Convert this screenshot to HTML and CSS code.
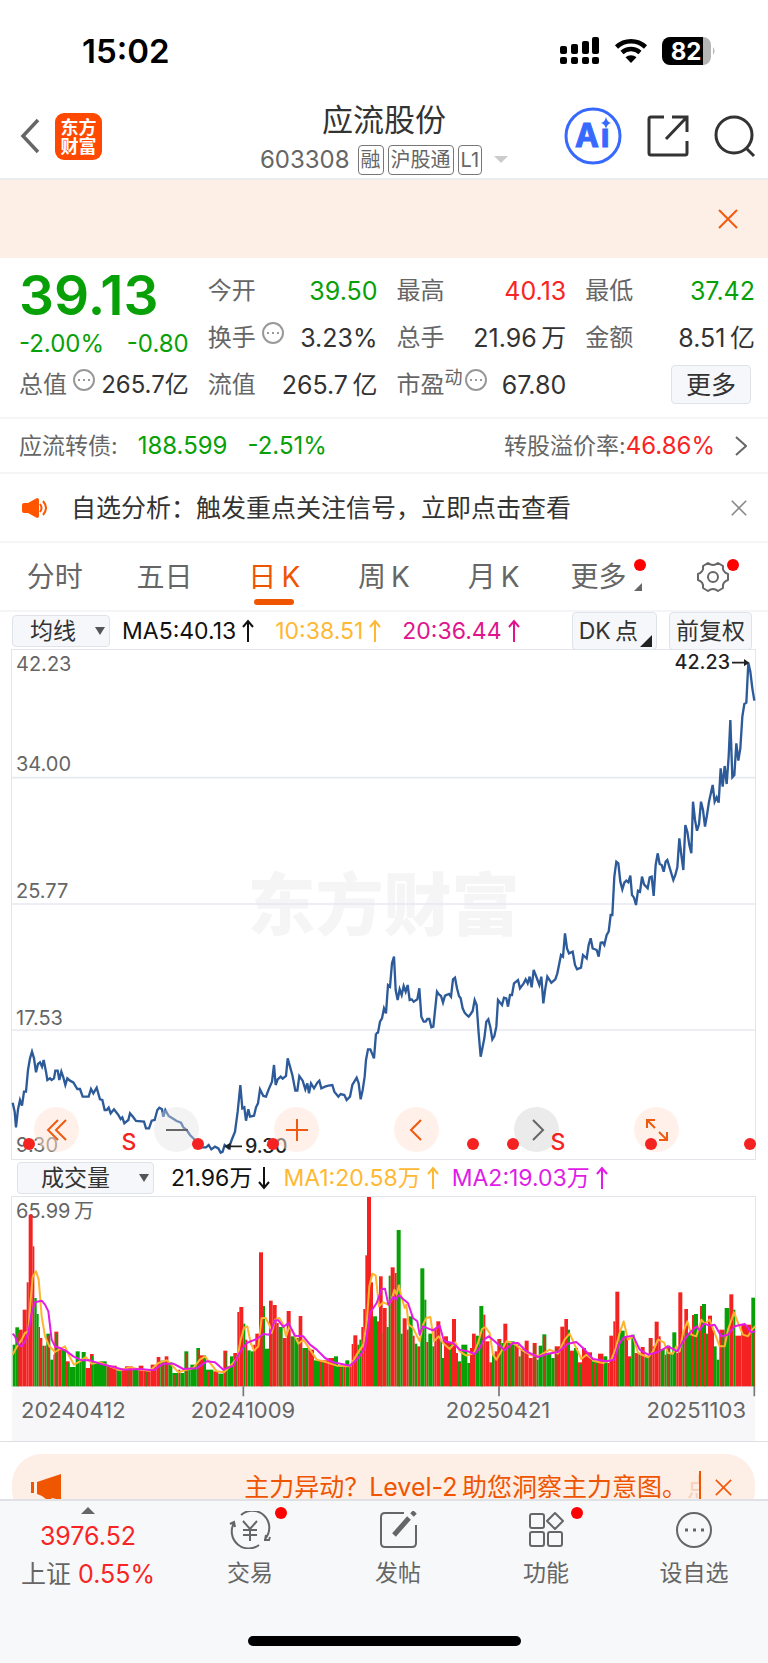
FILE: index.html
```html
<!DOCTYPE html>
<html lang="zh-CN">
<head>
  <meta charset="utf-8">
  <meta name="viewport" content="width=device-width, initial-scale=1">
  <title>应流股份 603308</title>
  <link rel="stylesheet" href="styles.css">
</head>
<body>
  <svg class="defs" aria-hidden="true">
    <symbol id="up" viewBox="0 0 12 24"><path d="M6 23V2M1 8l5-6 5 6"/></symbol>
    <symbol id="down" viewBox="0 0 12 24"><path d="M6 1v21M1 16l5 6 5-6"/></symbol>
    <symbol id="close" viewBox="0 0 20 20"><path d="M1 1l18 18M19 1L1 19"/></symbol>
    <symbol id="info" viewBox="0 0 22 22"><circle cx="11" cy="11" r="10"/><path d="M5 11h2M10 11h2M15 11h2" stroke-width="2"/></symbol>
  </svg>

  <div class="status">
    <span class="clock">15:02</span>
    <div class="status-icons">
      <svg width="40" height="28" viewBox="0 0 40 28">
        <g fill="#000">
          <rect x="0" y="9" width="7" height="8" rx="2"/><rect x="11" y="7" width="7" height="10" rx="2"/><rect x="22" y="4" width="7" height="13" rx="2"/><rect x="32" y="0" width="7" height="17" rx="2"/>
          <rect x="0" y="20" width="7" height="7" rx="2"/><rect x="11" y="20" width="7" height="7" rx="2"/><rect x="22" y="20" width="7" height="7" rx="2"/><rect x="32" y="20" width="7" height="7" rx="2"/>
        </g>
      </svg>
      <svg width="34" height="26" viewBox="0 0 34 26">
        <path d="M2.500 9a21 21 0 0 1 29 0M8 14.500a13.500 13.500 0 0 1 18 0" fill="none" stroke="#000" stroke-width="4.500"/>
        <path d="M17 25l-5.500-5.800a8.500 8.500 0 0 1 11 0z"/>
      </svg>
      <svg width="54" height="28" viewBox="0 0 54 28">
        <path d="M8 0h33v28H8a8 8 0 0 1-8-8V8a8 8 0 0 1 8-8z"/>
        <path d="M41 0a8 8 0 0 1 8 8v12a8 8 0 0 1-8 8zM51 10q3 4 0 8z" fill="#b5b5b5"/>
        <text x="24" y="23" class="battery-text">82</text>
      </svg>
    </div>
  </div>

  <header class="header">
    <div class="header-side">
      <button class="icon-btn" aria-label="返回"><svg width="20" height="36" viewBox="0 0 20 36"><path d="M18 2L3 18l15 16" fill="none" stroke="#666" stroke-width="3.500"/></svg></button>
      <div class="logo">东方<br>财富</div>
    </div>
    <div class="title">
      <h1>应流股份</h1>
      <div class="code">
        <span>603308</span>
        <span class="tag">融</span><span class="tag">沪股通</span><span class="tag">L1</span>
        <i class="caret"></i>
      </div>
    </div>
    <div class="header-side header-right">
      <button class="icon-btn" aria-label="AI">
        <svg width="58" height="58" viewBox="0 0 58 58"><circle cx="29" cy="29" r="27" fill="none" stroke="#3769ff" stroke-width="3"/><text x="23" y="40" class="ai-text">A</text><text x="41" y="40" class="ai-text">ı</text><path d="M42 10q1 5 5 6-4 1-5 6-1-5-5-6 4-1 5-6z" fill="#3769ff"/></svg>
      </button>
      <button class="icon-btn" aria-label="分享">
        <svg width="42" height="42" viewBox="0 0 42 42" fill="none" stroke="#333" stroke-width="3"><path d="M17 2H4q-2 0-2 2v34q0 2 2 2h34q2 0 2-2V26M25 2h15v15M39 3L19 24"/></svg>
      </button>
      <button class="icon-btn" aria-label="搜索">
        <svg width="42" height="44" viewBox="0 0 42 44" fill="none" stroke="#333" stroke-width="3"><circle cx="20" cy="21" r="18"/><path d="M32 34l8 8"/></svg>
      </button>
    </div>
  </header>

  <div class="banner">
    <button class="icon-btn" aria-label="关闭"><svg class="line-icon orange" width="20" height="20"><use href="#close"/></svg></button>
  </div>

  <section class="quote">
    <div class="price">
      <strong>39.13</strong>
      <div class="change"><span>-2.00%</span><span>-0.80</span></div>
    </div>
    <div class="cell"><span>今开</span><b class="green">39.50</b></div>
    <div class="cell"><span>最高</span><b class="red">40.13</b></div>
    <div class="cell"><span>最低</span><b class="green">37.42</b></div>
    <div class="cell"><span>换手<svg class="info" width="22" height="22"><use href="#info"/></svg></span><b>3.23%</b></div>
    <div class="cell"><span>总手</span><b>21.96&thinsp;万</b></div>
    <div class="cell"><span>金额</span><b>8.51&thinsp;亿</b></div>
    <div class="cell small"><span>总值<svg class="info" width="22" height="22"><use href="#info"/></svg></span><b>265.7亿</b></div>
    <div class="cell"><span>流值</span><b>265.7&thinsp;亿</b></div>
    <div class="cell"><span>市盈<sup>动</sup><svg class="info tight" width="22" height="22"><use href="#info"/></svg></span><b>67.80</b></div>
    <div class="cell cell-more"><button class="box-btn more">更多</button></div>
  </section>

  <a class="bond" href="#bond">
    <span>应流转债:</span>
    <b class="green">188.599</b>
    <b class="green">-2.51%</b>
    <span class="premium">转股溢价率:<b class="red">46.86%</b></span>
    <svg width="12" height="20" viewBox="0 0 12 20"><path d="M1 1l10 9-10 9" fill="none" stroke="#666" stroke-width="2"/></svg>
  </a>

  <div class="notice">
    <svg width="26" height="22" viewBox="0 0 26 22"><path d="M2 6h4l9-5q2 0 2 2v16q0 2-2 2l-9-5H2q-2 0-2-2V8q0-2 2-2z" fill="#ff5500"/><path d="M18 7q3 4 0 8M21 4q6 7 0 14" fill="none" stroke="#ff5500" stroke-width="2"/></svg>
    <span>自选分析：触发重点关注信号，立即点击查看</span>
    <button class="icon-btn" aria-label="关闭"><svg class="line-icon grey" width="16" height="16"><use href="#close"/></svg></button>
  </div>

  <nav class="tabs">
    <button>分时</button>
    <button>五日</button>
    <button class="active">日&thinsp;K</button>
    <button>周&thinsp;K</button>
    <button>月&thinsp;K</button>
    <button class="tab-more"><span class="has-dot">更多<i class="corner"></i></span></button>
    <button aria-label="设置"><span class="has-dot gear"><svg width="32" height="32" viewBox="0 0 32 32" fill="none" stroke="#666" stroke-width="2"><path d="M11 2q5 4 10 0l5 3q-1 6 5 8v6q-6 2-5 8l-5 3q-5-4-10 0l-5-3q1-6-5-8v-6q6-2 5-8z" stroke-linejoin="round"/><circle cx="16" cy="16" r="5"/></svg></span></button>
  </nav>

  <div class="legend">
    <label class="picker"><select aria-label="主图指标"><option>均线</option></select></label>
    <span class="ma">MA5:40.13<svg class="arrow"><use href="#up"/></svg></span>
    <span class="ma yellow">10:38.51<svg class="arrow"><use href="#up"/></svg></span>
    <span class="ma pink">20:36.44<svg class="arrow"><use href="#up"/></svg></span>
    <button class="box-btn dk">DK&thinsp;点<i class="corner dark"></i></button>
    <button class="box-btn">前复权</button>
  </div>

  <div class="chart price-chart">
    <div class="watermark">东方财富</div>
    <svg class="plot" viewBox="-1068 30 2229 1527">
      <path class="grid-line" d="M-1068 413H1161M-1068 792H1161M-1068 1170H1161"/>
      <polyline class="price-line" transform="translate(-1104 1140)" points="38,248 44,275 48,322 54,268 60,240 66,257 72,215 78,215 84,150 90,115 96,95 102,115 108,157 114,132 120,127 126,140 131,120 138,155 142,180 150,175 155,180 162,175 166,152 173,152 178,180 184,155 190,172 196,195 202,175 210,182 220,187 232,207 240,207 248,230 266,230 273,207 280,220 290,203 300,238 307,240 314,270 320,270 326,263 332,280 342,268 355,285 362,297 367,292 373,310 385,300 390,280 400,292 408,303 432,305 438,325 447,325 455,302 464,300 472,270 478,263 486,268 490,290 496,270 506,288 522,298 530,303 543,308 550,322 560,330 570,345 585,360 605,382 618,382 626,375 634,388 645,380 655,385 662,398 668,395 674,375 686,385 695,360 705,335 713,275 721,195 727,265 733,262 738,302 745,268 750,290 762,287 768,262 774,250 780,208 790,228 798,230 806,208 816,185 822,135 827,195 833,178 842,170 848,176 858,168 863,115 870,140 877,165 886,212 892,212 898,168 908,182 916,208 922,190 927,220 933,190 942,205 952,188 958,182 964,205 975,200 985,197 997,195 1003,215 1015,230 1022,222 1033,225 1040,240 1050,230 1057,195 1070,173 1076,190 1082,238 1088,210 1094,170 1098,120 1104,88 1111,88 1116,100 1122,115 1128,40"/>
      <polyline class="price-line" points="24,1180 30,1178 36,1145 42,1135 48,1105 54,1120 60,1035 66,1040 72,970 78,950 83,1050 89,1080 95,1048 101,1065 107,1038 113,1055 119,1035 125,1080 131,1078 137,1085 148,1078 154,1045 160,1130 167,1145 173,1145 178,1137 184,1137 190,1162 196,1160 207,1055 213,1063 219,1068 225,1088 231,1067 243,1062 249,1070 255,1018 261,1013 267,1045 273,1068 278,1075 284,1105 290,1118 296,1125 302,1130 308,1122 314,1113 320,1080 326,1095 332,1180 338,1250 344,1220 349,1195 355,1145 361,1138 367,1162 373,1198 379,1188 385,1160 390,1080 402,1095 408,1073 415,1075 420,1100 426,1065 432,1065 438,1030 450,1020 456,1045 467,1030 473,1018 479,1030 485,1010 491,1042 497,990 503,1005 514,1035 520,1010 526,1090 532,1045 538,1010 550,1028 562,1018 568,1000 579,945 585,950 591,880 597,925 603,940 614,935 621,975 627,988 639,983 645,945 656,955 662,915 668,895 674,925 686,930 692,950 698,908 704,907 709,915 716,885 722,875 728,825 733,825 739,710 745,665 751,670 757,725 763,748 769,728 775,722 781,727 787,707 792,765 798,773 804,795 810,752 816,755 822,710 828,733 839,745 845,712 851,710 857,768 863,675 869,640 875,672 881,675 887,695 893,665 898,660 910,700 916,720 922,705 928,682 934,595 940,645 946,690 952,555 958,575 964,615 970,640 975,485 981,540 987,572 993,553 999,485 1005,510 1011,560 1017,525 1023,485 1034,435 1040,485 1046,472 1052,488 1058,385 1064,440 1070,378 1076,432 1082,350 1087,240 1093,412 1099,405 1105,310 1111,362 1117,325 1123,230 1129,192 1135,188 1141,68 1147,95 1153,145 1159,182"/>
      <path d="M1092 68h40M-378 1519h-40" stroke="#222" stroke-width="5"/>
      <path d="M1144 68l-16-11v22zM-432 1519l20-11v22z" fill="#222"/>
      <g class="marks">
        <text x="1086" y="88" text-anchor="end">42.23</text>
        <text x="-369" y="1540">9.30</text>
      </g>
    </svg>
    <span class="scale s0">42.23</span>
    <span class="scale s1">34.00</span>
    <span class="scale s2">25.77</span>
    <span class="scale s3">17.53</span>
    <span class="scale s4">9.30</span>
    <div class="controls">
      <button aria-label="快退"><svg viewBox="0 0 24 24"><path d="M13 2L3 12l10 10M21 2L11 12l10 10"/></svg></button>
      <button class="off" aria-label="缩小"><svg viewBox="0 0 24 24"><path d="M1 12h22"/></svg></button>
      <button aria-label="放大"><svg viewBox="0 0 24 24"><path d="M1 12h22M12 1v22"/></svg></button>
      <button aria-label="左移"><svg viewBox="0 0 24 24"><path d="M16 2L6 12l10 10"/></svg></button>
      <button class="off dim" aria-label="右移"><svg viewBox="0 0 24 24"><path d="M8 2l10 10L8 22"/></svg></button>
      <button aria-label="全屏"><svg viewBox="0 0 24 24"><path d="M2 10V2h8M2 2l8 8M22 14v8h-8M22 22l-8-8"/></svg></button>
    </div>
    <svg class="plot events" viewBox="0 0 743 509">
      <g fill="#f52222">
        <circle cx="17" cy="494" r="6"/><circle cx="186" cy="494" r="6"/><circle cx="261" cy="494" r="6"/><circle cx="461" cy="494" r="6"/><circle cx="501" cy="494" r="6"/><circle cx="639" cy="494" r="6"/><circle cx="738" cy="494" r="6"/>
        <text x="117" y="500">S</text><text x="546" y="500">S</text>
      </g>
    </svg>
  </div>

  <div class="legend volume-legend">
    <label class="picker wide"><select aria-label="副图指标"><option>成交量</option></select></label>
    <span class="ma">21.96万<svg class="arrow"><use href="#down"/></svg></span>
    <span class="ma yellow">MA1:20.58万<svg class="arrow"><use href="#up"/></svg></span>
    <span class="ma magenta">MA2:19.03万<svg class="arrow"><use href="#up"/></svg></span>
  </div>

  <div class="chart volume-chart">
    <span class="scale s0">65.99&thinsp;万</span>
    <svg class="plot" viewBox="36 22 2229 568">
      <g id="bars"></g>
      <path d="M730 590v30M1497 590v30M2263 590v30" stroke="#777" stroke-width="5"/>
      <g class="avg avg-yellow">
        <polyline points="38,495 50,472 65,450 75,430 85,425 92,330 98,262 108,245 116,270 125,380 135,440 148,470 165,487 180,478 195,470 208,500 222,525 240,515 257,502 275,522 300,518 330,530 360,542 390,533 420,540 450,543 475,520 500,512 517,528 535,548 560,540 580,535 600,510 615,500 630,520 650,545 672,548 690,530 712,505 722,450 732,415 742,410 752,460 762,483 775,470 785,385 797,385 808,405 815,430 825,390 838,385 850,405 858,440 868,410 880,430 895,462 910,450 930,480 950,510 980,518 1010,528 1050,530 1070,495 1090,465 1100,400 1108,290 1117,252 1127,257 1137,350 1150,338 1165,345 1175,330 1183,300 1190,315 1197,285"/>
        <polyline transform="translate(1104 0)" points="92,285 100,320 110,355 115,345 122,405 135,415 155,455 165,405 175,385 187,382 198,455 212,440 225,460 245,478 262,458 275,485 295,498 318,490 330,460 342,418 352,412 365,430 375,495 385,510 400,485 415,455 440,462 460,480 490,497 515,498 545,480 570,492 590,450 605,432 620,465 640,508 655,495 680,515 705,520 730,510 742,480 755,430 767,395 780,450 795,440 810,490 840,503 855,485 870,450 888,458 900,490 915,492 925,470 935,485 945,430 958,395 970,435 985,440 1000,390 1010,402 1025,390 1040,430 1055,470 1070,470 1080,420 1098,368 1112,405 1125,435 1140,440 1152,420 1162,410"/>
      </g>
      <g class="avg avg-magenta">
        <polyline points="38,432 45,440 55,465 65,470 75,455 85,430 95,370 105,338 125,333 135,345 145,365 155,450 165,470 180,475 200,485 220,500 245,512 270,512 300,522 340,532 370,540 420,538 460,542 490,522 520,522 550,538 590,536 620,515 645,518 670,540 700,528 718,490 740,460 770,448 790,433 808,435 825,392 835,392 850,412 865,400 885,438 910,440 930,465 950,480 975,505 1000,518 1050,528 1075,505 1095,475 1110,370 1130,340 1145,298 1155,297 1165,345 1180,322 1188,330 1196,315"/>
        <polyline transform="translate(1104 0)" points="92,315 105,328 120,340 135,385 148,395 155,435 165,410 195,422 215,408 228,455 255,460 275,480 300,485 320,493 335,475 348,450 362,440 380,455 410,482 435,460 450,460 475,485 510,502 540,492 570,487 600,462 625,457 645,475 675,508 715,515 738,510 752,465 768,443 795,438 815,480 840,495 870,487 900,470 928,485 945,455 965,430 985,410 995,422 1008,402 1025,408 1040,405 1060,440 1080,435 1100,410 1130,403 1150,428 1162,425"/>
      </g>
    </svg>
  </div>
  <div class="axis"><span>20240412</span><span>20241009</span><span>20250421</span><span>20251103</span></div>

  <div class="promo-slot">
    <div class="promo">
      <svg width="32" height="26" viewBox="0 0 32 26" fill="#f05500"><path d="M0 8h3v11H0zM6 8L30 0v26l-9-2q-2 3-6 1l-4-3-5-2z"/></svg>
      <div class="promo-text">主力异动？Level-2&thinsp;助您洞察主力意图。<span class="faded">点</span></div>
      <button class="icon-btn" aria-label="关闭"><svg class="line-icon orange" width="17" height="17"><use href="#close"/></svg></button>
    </div>
  </div>

  <footer class="bottom">
    <div class="bottom-row">
      <a class="index" href="#index">
        <i class="up-caret"></i>
        <b>3976.52</b>
        <span>上证 <b>0.55%</b></span>
      </a>
      <a href="#trade"><span class="has-dot"><svg viewBox="0 0 42 38"><path d="M12 4a17 17 0 0 1 24 24M30 34A17 17 0 0 1 5 12M1 13l4-2 1 5M36 29l1-5M41 26l-1 3h-5M14 10l7 8 7-8M21 18v12M14 19h14M14 24h14"/></svg></span>交易</a>
      <a href="#post"><span><svg viewBox="0 0 42 38"><path d="M27 2H8q-4 0-4 4v26q0 4 4 4h27q4 0 4-4V14"/><path d="M17 24l15-17M35 4l3-3" stroke-width="5"/></svg></span>发帖</a>
      <a href="#tools"><span class="has-dot"><svg viewBox="0 0 42 38"><rect x="5" y="3" width="14" height="14" rx="2"/><rect x="5" y="21" width="14" height="14" rx="2"/><rect x="23" y="21" width="14" height="14" rx="2"/><path d="M30 2l8 8-8 8-8-8z" stroke-linejoin="round"/></svg></span>功能</a>
      <a href="#watch"><span><svg viewBox="0 0 42 38"><circle cx="21" cy="19" r="17"/><path d="M12 19h3M20 19h3M28 19h3" stroke-width="3"/></svg></span>设自选</a>
    </div>
    <div class="home-bar"></div>
  </footer>

  <script src="chart.js"></script>
</body>
</html>
```

FILE: styles.css
```css
* {
  box-sizing: border-box;
}
body {
  display: flex;
  flex-direction: column;
  min-height: 100vh;
  margin: 0;
  background: #fff;
  color: #333;
  font-family: Inter, "Noto Sans CJK SC", sans-serif;
  font-size: 24px;
  line-height: 32px;
}
button, select {
  font: inherit;
  color: inherit;
  background: none;
  border: 0;
  padding: 0;
  margin: 0;
}
a {
  color: inherit;
  text-decoration: none;
}
b {
  font-weight: 400;
}
svg {
  display: block;
  flex: none;
}
.defs {
  position: absolute;
  width: 0;
  height: 0;
}
.green { color: #07a007; }
.red { color: #f92424; }
.icon-btn {
  display: block;
}
.line-icon {
  fill: none;
  stroke-width: 2;
}
.orange { stroke: #f05a10; }
.grey { stroke: #888; }

/* status bar */
.status {
  display: flex;
  justify-content: space-between;
  align-items: center;
  height: 82px;
  padding: 20px 52px 0 82px;
}
.clock {
  color: #000;
  font-size: 33px;
  font-weight: 600;
}
.status-icons {
  display: flex;
  align-items: center;
  gap: 14px;
}
.battery-text {
  fill: #fff;
  font-size: 24px;
  font-weight: 700;
  text-anchor: middle;
}

/* header */
.header {
  display: grid;
  grid-template-columns: 1fr auto 1fr;
  align-items: center;
  height: 98px;
  padding: 0 12px;
  border-bottom: 2px solid #ececee;
}
.header-side {
  display: flex;
  align-items: center;
  gap: 15px;
  padding: 12px 0 0 8px;
}
.header-right {
  justify-content: flex-end;
  gap: 25px;
}
.logo {
  width: 47px;
  height: 47px;
  padding-top: 5px;
  border-radius: 9px;
  background: #ff4800;
  color: #fff;
  font-size: 18px;
  font-weight: 700;
  line-height: 19px;
  text-align: center;
}
.title {
  padding-top: 11px;
}
.title h1 {
  margin: 0;
  font-size: 31px;
  font-weight: 400;
  line-height: 48px;
  text-align: center;
}
.code {
  display: flex;
  align-items: center;
  gap: 4px;
  color: #666;
}
.tag {
  padding: 0 2px;
  border: 1px solid #777;
  border-radius: 4px;
  font-size: 20px;
  line-height: 28px;
}
.code span:first-child {
  margin-right: 4px;
}
.caret {
  margin-left: 8px;
  border: 7px solid transparent;
  border-top-color: #ccc;
  border-bottom: 0;
}
.ai-text {
  fill: #3769ff;
  stroke: #3769ff;
  font-size: 32px;
  font-weight: 700;
  text-anchor: middle;
}
.banner {
  display: flex;
  justify-content: flex-end;
  align-items: center;
  height: 78px;
  padding-right: 30px;
  background: #fdeee6;
}

/* quote */
.quote {
  display: grid;
  grid-template-columns: repeat(4, 1fr);
  grid-auto-rows: 47px;
  column-gap: 19px;
  padding: 9px 13px 9px 19px;
  border-bottom: 2px solid #f5f5f7;
}
.price {
  grid-row: span 2;
  color: #07a007;
}
.price strong {
  display: block;
  font-size: 55px;
  font-weight: 600;
  line-height: 56px;
}
.change {
  display: flex;
  justify-content: space-between;
  line-height: 42px;
}
.cell {
  display: flex;
  justify-content: space-between;
  align-items: center;
  font-size: 25px;
  white-space: nowrap;
}
.cell span {
  display: flex;
  align-items: center;
  color: #666;
  font-size: 24px;
}
.cell.small {
  font-size: 24px;
}
.cell sup {
  align-self: flex-start;
  font-size: 18px;
  line-height: 18px;
}
.info {
  margin: 0 0 10px 6px;
  fill: none;
  stroke: #999;
  stroke-width: 2;
}
.info.tight {
  margin-left: 2px;
}
.box-btn {
  border: 1px solid #dfe2e8;
  border-radius: 4px;
  background: #f6f7fa;
}
.cell-more {
  justify-content: flex-end;
  padding-right: 4px;
}
.more {
  width: 80px;
  height: 39px;
}

/* convertible bond and notice */
.bond {
  display: flex;
  align-items: center;
  gap: 20px;
  height: 55px;
  padding: 0 21px 0 19px;
  border-bottom: 2px solid #f5f5f7;
  color: #666;
  font-size: 23px;
}
.bond b {
  font-size: 24px;
}
.premium {
  margin-left: auto;
}
.notice {
  display: flex;
  align-items: center;
  height: 69px;
  padding: 0 21px 0 22px;
  border-bottom: 2px solid #f5f5f7;
  font-size: 25px;
}
.notice span {
  flex: 1;
  margin-left: 23px;
}

/* period tabs */
.tabs {
  display: grid;
  grid-template-columns: repeat(7, 1fr);
  height: 69px;
  border-bottom: 2px solid #f5f5f7;
  color: #666;
  font-size: 28px;
}
.tabs button {
  display: flex;
  position: relative;
  justify-content: center;
  align-items: center;
}
.tabs .tab-more {
  padding-right: 10px;
}
.tabs .active {
  color: #ef5500;
}
.tabs .active::after {
  content: "";
  position: absolute;
  bottom: 5px;
  width: 40px;
  height: 6px;
  border-radius: 3px;
  background: #ef5500;
}
.has-dot {
  position: relative;
}
.has-dot::after {
  content: "";
  position: absolute;
  top: -2px;
  right: -20px;
  width: 12px;
  height: 12px;
  border-radius: 50%;
  background: #f00;
}
.gear::after {
  right: -10px;
}
.corner {
  position: absolute;
  right: -16px;
  bottom: 2px;
  border-left: 8px solid transparent;
  border-bottom: 8px solid #666;
}
.corner.dark {
  right: 4px;
  bottom: 2px;
  border-width: 0 0 12px 12px;
  border-bottom-color: #222;
}

/* indicator rows */
.legend {
  display: flex;
  align-items: center;
  height: 38px;
  padding: 0 16px 0 12px;
  white-space: nowrap;
}
.legend .box-btn {
  height: 38px;
  padding: 0 6px;
  margin-left: 12px;
  font-size: 23px;
}
.legend .dk {
  position: relative;
  margin-left: auto;
  padding-right: 18px;
}
.picker {
  position: relative;
  width: 98px;
  margin-right: 12px;
}
.picker::after {
  content: "";
  position: absolute;
  top: 12px;
  right: 5px;
  border: 5px solid transparent;
  border-top: 8px solid #555;
  border-bottom: 0;
}
.picker select {
  display: block;
  appearance: none;
  width: 100%;
  height: 32px;
  padding-left: 17px;
  border: 1px solid #dfe2e8;
  border-radius: 4px;
  background: #f6f7fa;
  font-size: 23px;
  line-height: 28px;
}
.ma {
  display: flex;
  align-items: center;
  gap: 6px;
  margin-right: 21px;
  color: #111;
  font-size: 23px;
}
.arrow {
  width: 12px;
  height: 24px;
  fill: none;
  stroke: currentColor;
  stroke-width: 2;
}
.yellow { color: #ffb833; }
.pink { color: #e0148c; }
.magenta { color: #e01ce6; }
.volume-legend {
  padding-left: 17px;
}
.volume-legend .ma {
  margin-right: 13px;
}
.picker.wide {
  width: 137px;
  margin-right: 17px;
}
.picker.wide select {
  padding-left: 23px;
}

/* charts */
.chart {
  position: relative;
  margin: 0 13px 0 12px;
  outline: 1px solid #e2e5ea;
}
.plot {
  position: relative;
  width: 100%;
  overflow: visible;
}
.grid-line {
  stroke: #e6e9f1;
  stroke-width: 5;
}
.price-line {
  fill: none;
  stroke: #2d5a99;
  stroke-width: 7;
}
.marks {
  fill: #222;
  font-size: 59px;
  font-weight: 500;
}
.events {
  position: absolute;
  top: 0;
  left: 0;
  font-size: 23px;
  font-weight: 500;
  text-anchor: middle;
  pointer-events: none;
}
.watermark {
  position: absolute;
  top: 43%;
  width: 100%;
  color: #f5f5f5;
  font-size: 68px;
  font-weight: 900;
  line-height: 72px;
  text-align: center;
}
.scale {
  position: absolute;
  left: 4px;
  color: #666;
  font-size: 20px;
  line-height: 24px;
}
.s0 { top: 2px; }
.s1 { top: 20%; }
.s2 { top: 45%; }
.s3 { top: 70%; }
.s4 { bottom: 2px; }
.controls {
  display: flex;
  position: absolute;
  bottom: 7px;
  left: 0;
  justify-content: space-between;
  width: 100%;
  padding: 0 76px 0 22px;
}
.controls button {
  display: flex;
  justify-content: center;
  align-items: center;
  width: 45px;
  height: 45px;
  border-radius: 50%;
  background: rgba(255, 227, 211, 0.5);
}
.controls svg {
  width: 24px;
  fill: none;
  stroke: #ee5a10;
  stroke-width: 2;
}
.controls .off {
  background: rgba(225, 225, 225, 0.4);
}
.controls .dim {
  background: #ebebeb;
}
.controls .off svg {
  stroke: #666;
}
.avg {
  fill: none;
  stroke-width: 6;
  stroke-linejoin: round;
}
.avg-yellow { stroke: #ffb42e; }
.avg-magenta { stroke: #e41be4; }
.bar-up { fill: #f52222; }
.bar-down { fill: #07a007; }
.axis {
  display: grid;
  grid-template-columns: 121fr 220fr 290fr 112fr;
  height: 55px;
  margin: 0 13px 0 12px;
  background: #f7f7fa;
  color: #666;
  font-size: 22px;
  line-height: 48px;
  text-align: center;
}
.axis span:first-child {
  padding-left: 9px;
  text-align: left;
}
.axis span:last-child {
  padding-right: 9px;
  text-align: right;
}

/* promo strip, cut off by the bottom bar */
.promo-slot {
  height: 58px;
  padding: 12px 13px 0 12px;
  border-top: 1px solid #dedfe3;
  overflow: hidden;
}
.promo {
  display: flex;
  align-items: center;
  height: 66px;
  padding: 0 23px 0 19px;
  border-radius: 30px;
  background: #fdeee6;
  color: #ef5500;
  font-size: 25px;
}
.promo-text {
  flex: 1;
  margin-right: 14px;
  border-right: 2px solid #ef5500;
  overflow: hidden;
  text-align: right;
  white-space: nowrap;
}
.faded {
  display: inline-block;
  width: 12px;
  opacity: 0.2;
  overflow: hidden;
  vertical-align: top;
}

/* bottom bar */
.bottom {
  flex: 1;
  border-top: 2px solid #dfe1e5;
  background: #f7f8fa;
  color: #666;
  font-size: 23px;
}
.bottom-row {
  display: grid;
  grid-template-columns: 176px repeat(4, 1fr);
  height: 135px;
}
.bottom-row a {
  display: flex;
  flex-direction: column;
  align-items: center;
  padding-top: 10px;
  gap: 8px;
}
.bottom-row svg {
  width: 42px;
  height: 38px;
  fill: none;
  stroke: #666;
  stroke-width: 2;
}
.bottom .has-dot::after {
  top: -4px;
  right: -16px;
}
.bottom .index {
  padding-top: 6px;
  gap: 7px;
}
.index b {
  color: #f92424;
  font-size: 25px;
  line-height: 30px;
}
.index span {
  font-size: 25px;
}
.up-caret {
  border: 7px solid transparent;
  border-top: 0;
  border-bottom-color: #666;
}
.home-bar {
  width: 273px;
  height: 10px;
  margin: 0 auto 17px;
  border-radius: 5px;
  background: #000;
}
```

FILE: chart.js
```js
// volume bars: left edge, top, direction (r = up day, g = down day)
const BASE = 590;
const END = 2265;
const early = '38,465,g 46,413,g 57,420,r 68,360,r 80,278,r 86,75,r 98,170,r 103,325,g 110,373,g 116,412,r 120,445,r 127,468,g 133,468,r 139,432,g 151,510,g 160,495,r 163,426,r 175,480,r 185,478,g 198,515,r 209,532,g 227,485,g 239,510,g 245,487,g 257,535,r 270,493,r 281,518,g 300,515,g 320,528,r 350,542,g 365,536,r 375,530,r 398,540,g 416,528,r 430,540,r 452,525,r 470,502,r 481,513,g 494,500,r 505,518,g 517,550,g 535,540,r 541,550,g 553,485,g 565,535,g 571,525,g 589,475,g 600,497,r 612,497,g 618,540,g 640,545,r 655,552,g 670,483,r 682,530,g 690,500,g 700,490,r 712,367,r 718,352,r 730,402,g 736,450,r 742,482,g 752,485,g 760,465,r 766,432,r 777,188,r 789,349,g 795,477,g 807,333,r 818,346,r 830,400,r 836,412,g 848,445,r 860,364,r 872,440,g 884,445,g 896,379,r 907,475,g 925,480,r 942,512,g 960,512,r 985,505,r 1002,500,g 1014,528,g 1030,530,r 1036,512,g 1048,530,r 1055,463,r 1060,437,r 1072,465,g 1078,450,g 1084,412,r 1090,358,r 1096,197,r 1101,22,r 1113,278,r 1119,380,g 1131,395,r 1137,260,r 1148,355,r 1160,412,g 1166,258,g 1172,233,r 1184,250,r';
const late = '86,121,g 98,432,g 104,386,r 116,420,r 122,380,g 134,438,r 140,462,g 148,470,r 157,236,g 169,330,g 175,457,r 181,432,g 193,470,g 199,420,r 205,395,r 217,455,g 222,505,g 228,440,r 240,460,r 252,388,r 264,490,r 270,515,g 280,465,g 298,520,g 306,475,r 312,432,r 323,438,g 334,349,g 346,375,r 352,455,r 364,518,r 372,495,g 380,485,r 388,448,r 400,460,g 406,402,r 418,455,g 440,465,r 452,500,g 458,478,r 470,453,r 482,505,r 494,460,r 506,510,g 512,468,g 523,434,g 535,490,g 550,505,g 560,470,r 577,411,r 589,388,r 600,420,g 606,483,r 618,475,g 630,518,r 642,475,r 654,488,r 672,515,g 690,492,r 706,500,g 718,520,r 724,438,r 736,395,r 742,306,r 754,423,g 770,440,r 780,500,r 790,435,g 800,490,r 812,490,g 818,472,r 830,500,g 842,445,r 854,470,r 860,396,r 872,440,r 878,478,g 890,495,r 895,468,g 907,490,g 913,428,g 925,490,r 931,308,r 943,435,g 949,358,r 960,430,g 972,376,r 978,373,g 990,410,g 996,349,r 1002,343,g 1014,432,g 1020,378,r 1032,420,r 1038,470,g 1046,510,g 1054,420,r 1070,355,g 1084,314,r 1096,360,g 1102,438,r 1120,405,r 1150,324,g';

function parse(text, offset) {
  return text.split(' ').map(function (item) {
    const [x, y, dir] = item.split(',');
    return { x: Number(x) + offset, y: Number(y), dir: dir };
  });
}

const bars = document.getElementById('bars');

function addBar(x, y, width, dir) {
  const rect = document.createElementNS('http://www.w3.org/2000/svg', 'rect');
  rect.setAttribute('x', x);
  rect.setAttribute('y', y);
  rect.setAttribute('width', width);
  rect.setAttribute('height', BASE - y);
  rect.setAttribute('class', dir === 'r' ? 'bar-up' : 'bar-down');
  bars.appendChild(rect);
}

const days = parse(early, 0).concat(parse(late, 1104));
days.forEach(function (day, i) {
  const next = i + 1 < days.length ? days[i + 1].x : END;
  addBar(day.x, day.y, next - day.x, day.dir);
  if (i % 3 === 1 && next - day.x > 9) {
    addBar(day.x + 6, Math.max(day.y + 6, 430), 4, day.dir === 'r' ? 'g' : 'r');
  }
});
```
